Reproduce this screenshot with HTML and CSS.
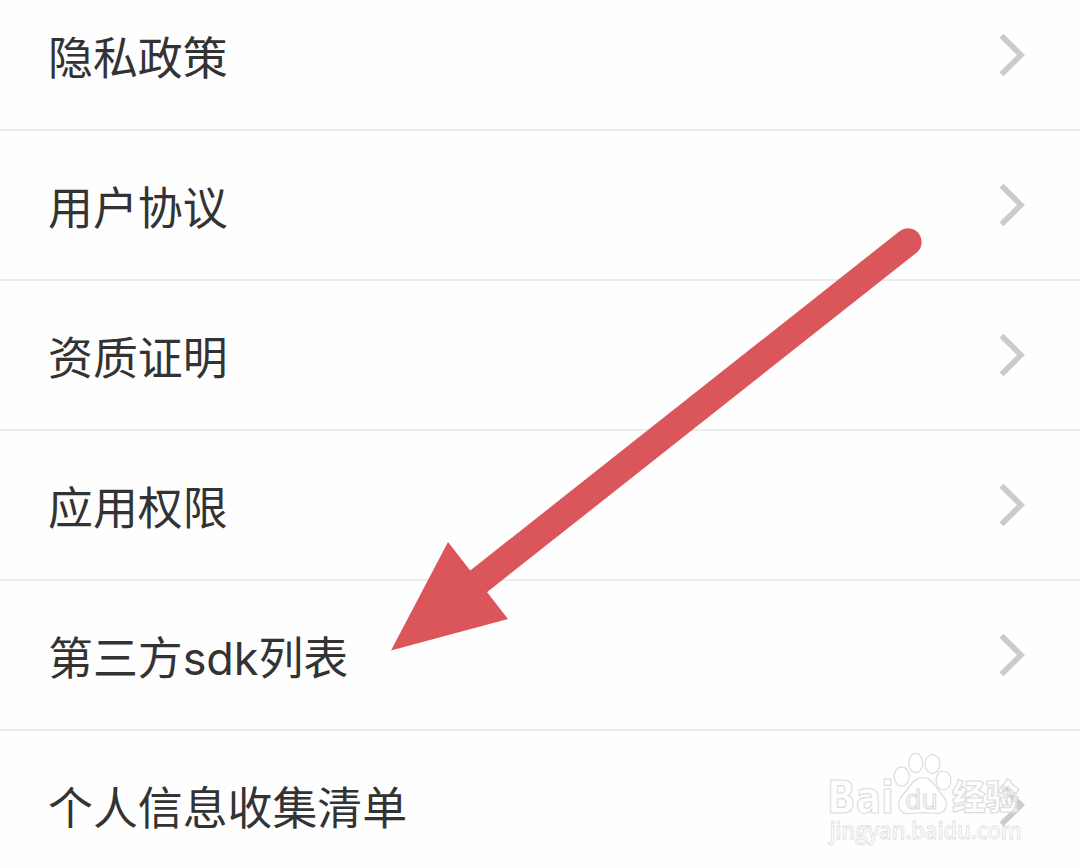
FILE: index.html
```html
<!DOCTYPE html>
<html lang="zh-CN">
<head>
    <meta charset="UTF-8">
    <meta name="viewport" content="width=device-width, initial-scale=1.0">
    <title>隐私与协议</title>
    <link rel="stylesheet" href="styles.css">
</head>
<body>
    <div class="page">
        <svg class="defs" width="0" height="0">
            <symbol id="chevron" viewBox="0 0 28 44">
                <path d="M1.5 2.8 L21 22 L1.5 41.2" fill="none" stroke="#cbcbcb" stroke-width="5.6"/>
            </symbol>
        </svg>
        <ul class="list">
            <li class="row"><span class="label">隐私政策</span><svg class="arrow"><use href="#chevron"/></svg></li>
            <li class="row"><span class="label">用户协议</span><svg class="arrow"><use href="#chevron"/></svg></li>
            <li class="row"><span class="label">资质证明</span><svg class="arrow"><use href="#chevron"/></svg></li>
            <li class="row"><span class="label">应用权限</span><svg class="arrow"><use href="#chevron"/></svg></li>
            <li class="row"><span class="label">第三方<span class="latin">sdk</span>列表</span><svg class="arrow"><use href="#chevron"/></svg></li>
            <li class="row"><span class="label">个人信息收集清单</span><svg class="arrow"><use href="#chevron"/></svg></li>
        </ul>

        <svg class="pointer" viewBox="0 0 540 430">
            <path d="M524 17 L90 360" stroke="#da565b" stroke-width="27.4" stroke-linecap="round"/>
            <path d="M7 425.5 L64 317 L124 394 Z" fill="#da565b"/>
        </svg>

        <svg class="watermark" viewBox="0 0 210 110">
            <g class="outline">
                <text class="brand" x="3" y="65" textLength="67" lengthAdjust="spacingAndGlyphs">Bai</text>
                <ellipse cx="77.7" cy="28.5" rx="7.5" ry="9.7"/>
                <ellipse cx="91.7" cy="15" rx="7" ry="9.7"/>
                <ellipse cx="108.5" cy="16" rx="7.5" ry="9.5"/>
                <ellipse cx="119.5" cy="32.5" rx="7.5" ry="9.5"/>
                <path d="M99 29.5 C90 29.5 87 37 82 43 C77 48 73 53 75 59 C77 67 85 66 92 65 C97 64.5 102 64.5 107 65 C114 66 120 66 122 59 C124 53 120 48 115 43 C110 37 108 29.5 99 29.5 Z"/>
                <text class="du" x="81" y="60.5" textLength="33" lengthAdjust="spacingAndGlyphs">du</text>
                <text class="exp" x="128" y="62" textLength="67" lengthAdjust="spacingAndGlyphs">经验</text>
                <text class="site" x="5.5" y="90.5" textLength="192" lengthAdjust="spacingAndGlyphs">jingyan.baidu.com</text>
            </g>
        </svg>
    </div>
</body>
</html>
```

FILE: styles.css
```css
body {
    margin: 0;
    background-color: #fefefe;
    font-family: "Noto Sans CJK SC", sans-serif;
    color: #333;
}
.page {
    position: relative;
    height: 868px;
    overflow: hidden;
}
.defs {
    display: block;
}
.list {
    list-style: none;
    margin: -19px 0 0;
    padding: 0;
}
.row {
    display: flex;
    align-items: center;
    justify-content: space-between;
    height: 150px;
    padding: 0 52px 0 48px;
    box-sizing: border-box;
    border-bottom: 2px solid #ececec;
    font-size: 44.9px;
    line-height: 66px;
}
.row:last-child {
    border-bottom-color: transparent;
}
.label {
    padding-top: 2px;
}
.latin {
    font-family: Inter, sans-serif;
    font-size: 45px;
    line-height: 1;
    letter-spacing: -0.1px;
}
.arrow {
    width: 28px;
    height: 44px;
}
.pointer {
    position: absolute;
    left: 384px;
    top: 225px;
    width: 540px;
    height: 430px;
}
.watermark {
    position: absolute;
    left: 824px;
    top: 748px;
    width: 210px;
    height: 110px;
}
.outline {
    fill: rgba(255, 255, 255, 0.6);
    stroke: #dcdcdc;
    stroke-width: 1.2;
}
.brand {
    font: bold 44px "DejaVu Sans", sans-serif;
}
.du {
    font: 27px "DejaVu Sans", sans-serif;
}
.exp {
    font: 900 35px "Noto Sans CJK SC", sans-serif;
}
.site {
    font: 600 24px "Open Sans", sans-serif;
    stroke-width: 0.8;
}
```
